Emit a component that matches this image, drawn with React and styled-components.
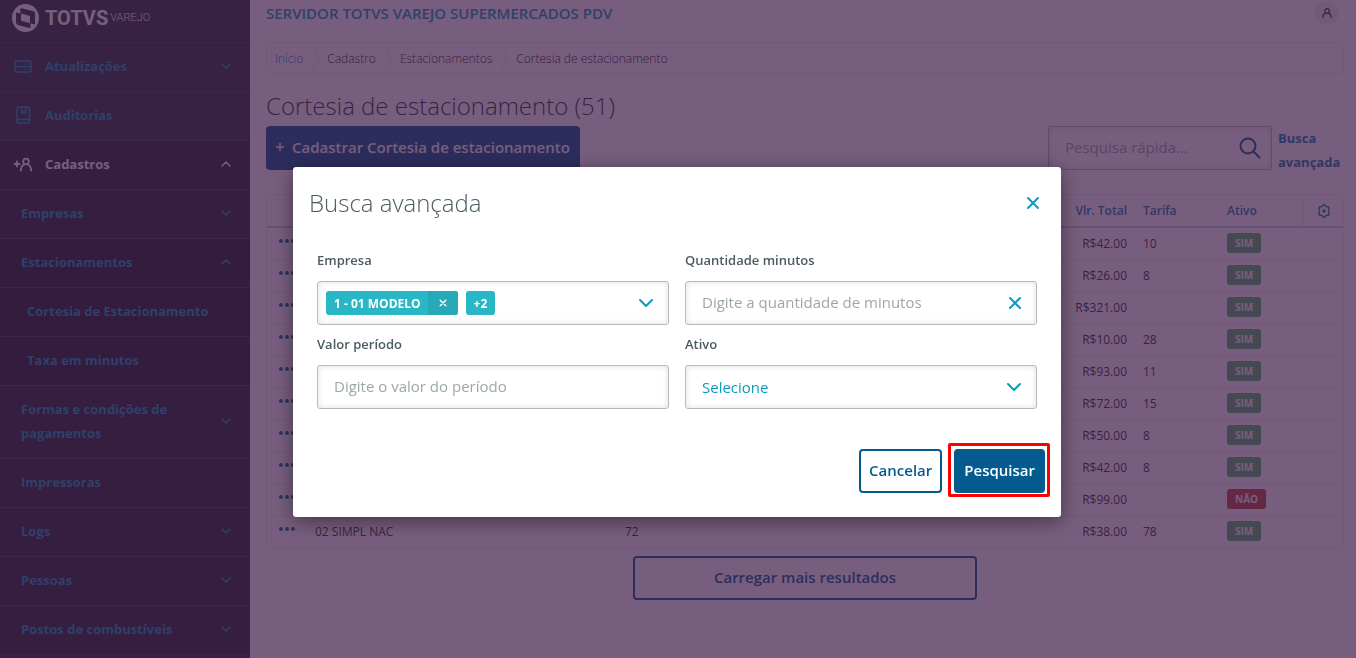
import React from "react";
import styled, { createGlobalStyle } from "styled-components";

const Global = createGlobalStyle`
  *, *::before, *::after { box-sizing: border-box; }
  body { margin: 0; }
  body, button, input, select { font-family: "Open Sans", "Noto Sans", sans-serif; }
  button { cursor: pointer; }
  a { text-decoration: none; }
  svg { display: block; flex: none; }
`;

const Page = styled.div`
  display: flex;
  height: 100vh;
  overflow: hidden;
  background: #fff;
`;

/* ---------- side menu ---------- */

const Sidebar = styled.nav`
  flex: 0 0 250px;
  background: #2c3739;
`;

const Brand = styled.div`
  display: flex;
  align-items: center;
  height: 42px;
  padding: 0 12px 6px;
  color: #fff;
`;

const BrandName = styled.span`
  margin-left: 6px;
  font: bold 20px/24px Roboto, sans-serif;
`;

const BrandUnit = styled.span`
  margin-left: 2px;
  font: 300 11px/24px Roboto, sans-serif;
`;

const MenuList = styled.ul`
  margin: 0;
  padding: 0;
  list-style: none;
  border-bottom: 1px solid #394649;
`;

const MenuLink = styled.a`
  display: flex;
  align-items: center;
  padding: 11px 18px 13px ${(p) => [13, 21, 27][p.$level]}px;
  border-top: 1px solid #394649;
  background: ${(p) => ["#2c3739", "#222b2d", "#1c2426"][p.$shade]};
  color: ${(p) => (p.$active ? "#fff" : "#0c9abe")};
  font-size: 13px;
  font-weight: 700;
  line-height: 24px;
`;

const MenuIcon = styled.span`
  width: 32px;
`;

const MenuLabel = styled.span`
  flex: 1;
  max-width: 192px;
`;

const MenuArrow = styled.span`
  margin-left: auto;
`;

/* ---------- main area ---------- */

const Main = styled.main`
  flex: 1;
  min-width: 0;
  padding: 0 12px 0 16px;
`;

const TopBar = styled.header`
  display: flex;
  align-items: center;
  justify-content: space-between;
  height: 42px;
  padding: 0 5px 16px 0;
  color: #0c9abe;
  font-size: 15px;
  font-weight: 600;
  line-height: 24px;
`;

const Avatar = styled.button`
  display: grid;
  place-items: center;
  width: 24px;
  height: 24px;
  padding: 0;
  border: 0;
  border-radius: 50%;
  background: #eceeee;
  color: #2c3739;
`;

const Crumbs = styled.nav`
  display: flex;
  align-items: center;
  gap: 8px;
  height: 32px;
  margin-bottom: 12px;
  padding: 0 8px;
  border: 1px solid #eceeee;
  border-radius: 3px;
  font-size: 12px;
  font-weight: 300;
  color: #1d2426;
`;

const CrumbLink = styled.a`
  color: #0c7fae;
`;

const PageTitle = styled.h1`
  margin: 0;
  color: #2c3739;
  font-size: 24px;
  font-weight: 300;
  line-height: 40px;
`;

const ActionBar = styled.div`
  display: flex;
  align-items: flex-start;
  justify-content: space-between;
  margin-bottom: 20px;
`;

const Button = styled.button`
  display: flex;
  align-items: center;
  justify-content: center;
  gap: 8px;
  height: 44px;
  padding: 0 8px 2px;
  border: 2px solid #045b8f;
  border-radius: 4px;
  background: ${(p) => (p.$primary ? "#045b8f" : "transparent")};
  color: ${(p) => (p.$primary ? "#fff" : "#045b8f")};
  font-size: 15px;
  font-weight: 600;
`;

const LoadMore = styled(Button)`
  width: 32%;
  margin: 8px auto 0;
`;

const SearchArea = styled.div`
  display: flex;
  gap: 6px;
  width: 296px;
`;

const Field = styled.div`
  display: flex;
  align-items: center;
  width: 100%;
  min-width: 0;
  height: 44px;
  padding: 0 ${(p) => p.$right || 14}px 0 ${(p) => p.$left || 16}px;
  border: 1px solid #b2bcbf;
  border-radius: 3px;
  background: #fff;
  box-shadow: inset 0 0 6px rgba(0, 0, 0, 0.12);
`;

const TextInput = styled.input`
  flex: 1;
  min-width: 0;
  padding: 0 0 2px;
  border: 0;
  outline: 0;
  background: transparent;
  font-size: 15px;
  line-height: 24px;
  &::placeholder { color: #9da7a9; opacity: 1; }
`;

const IconButton = styled.button`
  display: grid;
  place-items: center;
  width: ${(p) => (p.$fill ? "100%" : "auto")};
  padding: 0;
  border: 0;
  background: transparent;
  color: ${(p) => p.$color || "#0c9abe"};
`;

const AdvancedLink = styled.a`
  flex: 0 0 66px;
  color: #0c7fae;
  font-size: 13px;
  font-weight: 700;
  line-height: 24px;
`;

/* ---------- table ---------- */

const TableFrame = styled.div`
  border: 1px solid #eceeee;
  border-radius: 3px;
`;

const Table = styled.table`
  width: 100%;
  table-layout: fixed;
  border-collapse: separate;
  border-spacing: 0;
  color: #2c3739;
  font-size: 12px;
`;

const Col = styled.col`
  width: ${(p) => p.$w};
`;

const Th = styled.th`
  height: 33px;
  padding: 0 8px;
  border-bottom: 2px solid #c0d4e4;
  border-left: ${(p) => (p.$divider ? "1px solid #eceeee" : "0")};
  color: #0c7fae;
  font-weight: 600;
  text-align: ${(p) => p.$align || "left"};
`;

const Td = styled.td`
  height: 32px;
  padding: 0 8px ${(p) => (p.$raised ? 2 : 0)}px;
  border-bottom: 1px solid #eceeee;
  text-align: ${(p) => p.$align || "left"};
  tr:last-child & { height: 31px; border-bottom: 0; }
`;

const Tag = styled.span`
  display: block;
  width: fit-content;
  padding: 0 8px;
  border-radius: 3px;
  background: ${(p) => (p.$no ? "#c64840" : "#56b96b")};
  color: #fff;
  font-size: 10px;
  font-weight: 700;
  line-height: 20px;
`;

/* ---------- modal ---------- */

const Overlay = styled.div`
  position: fixed;
  inset: 0;
  display: grid;
  place-items: center;
  padding: 26px 2px 0 0;
  background: rgba(61, 26, 71, 0.7);
`;

const Dialog = styled.section`
  width: 768px;
  max-width: 100%;
  padding: 16px 16px 24px;
  border-radius: 3px;
  background: #fff;
  box-shadow: 0 4px 20px rgba(0, 0, 0, 0.45);
`;

const DialogHead = styled.header`
  display: flex;
  align-items: center;
  justify-content: space-between;
  padding-right: 5px;
`;

const DialogTitle = styled.h2`
  margin: 0;
  color: #4a5c60;
  font-size: 24px;
  font-weight: 300;
  line-height: 40px;
`;

const Form = styled.form`
  display: grid;
  grid-template-columns: 1fr 1fr;
  column-gap: 16px;
  padding: 24px 8px 34px;
`;

const Group = styled.div`
  display: flex;
  flex-direction: column;
  height: 84px;
`;

const Label = styled.label`
  height: 34px;
  color: #4a5c60;
  font-size: 13px;
  font-weight: 600;
  line-height: 26px;
`;

const Chip = styled.span`
  display: flex;
  align-items: center;
  height: 24px;
  margin-right: 8px;
  padding-left: 8px;
  padding-right: ${(p) => (p.$closable ? 0 : 8)}px;
  overflow: hidden;
  border-radius: 3px;
  background: #29b6c5;
  color: #fff;
  font-size: 12px;
  font-weight: 700;
`;

const ChipClose = styled.button`
  display: grid;
  place-items: center;
  width: 30px;
  height: 24px;
  margin-left: 7px;
  padding: 0;
  border: 0;
  background: #28a9b7;
  color: #fff;
`;

const Spring = styled.span`
  flex: 1;
`;

const Select = styled.select`
  flex: 1;
  height: 42px;
  padding: 0;
  border: 0;
  outline: 0;
  appearance: none;
  background: transparent;
  color: #0c9abe;
  font-size: 15px;
`;

const DialogFoot = styled.footer`
  display: flex;
  justify-content: flex-end;
  gap: 12px;
`;

const Highlight = styled.div`
  position: relative;
  &::after {
    content: "";
    position: absolute;
    inset: -6px -5px -4px -6px;
    border: 3px solid #f00;
    border-radius: 2px;
    pointer-events: none;
  }
`;

/* ---------- icons ---------- */

const Stroke = ({ w = 16, h = w, box = `0 0 ${w} ${h}`, sw = 2, children }) => (
  <svg width={w} height={h} viewBox={box} fill="none" stroke="currentColor" strokeWidth={sw} strokeLinecap="round" strokeLinejoin="round" aria-hidden="true">
    {children}
  </svg>
);

const Chevron = ({ up, big }) =>
  big ? (
    <Stroke w={16} h={10} sw={2}><path d="M2 2 8 8 14 2" /></Stroke>
  ) : (
    <Stroke w={12} h={8} sw={1.5}><path d={up ? "M2 6 6 2 10 6" : "M2 2 6 6 10 2"} /></Stroke>
  );

const Cross = ({ size = 14, sw = 2 }) => (
  <Stroke w={size} box="0 0 14 14" sw={sw}><path d="M2 2 12 12M12 2 2 12" /></Stroke>
);

const ServerIcon = () => (
  <Stroke w={20} sw={1.5}>
    <rect x="2" y="5" width="16" height="11" rx="2" />
    <path d="M2 10.500h16M12 7.800h.1M15 7.800h.1M12 13.200h.1M15 13.200h.1" />
  </Stroke>
);

const BookIcon = () => (
  <Stroke w={20} sw={1.5}>
    <rect x="4" y="2" width="12.500" height="16" rx="1.500" />
    <path d="M4 14.500h12.500M8.500 2v6.500l2-1.800 2 1.800V2" />
  </Stroke>
);

const AddUserIcon = () => (
  <Stroke w={20} sw={1.8}>
    <path d="M1.500 10h5M4 7.500v5" />
    <circle cx="13" cy="7.500" r="2.800" />
    <path d="M7.800 16.500c0-3 1.500-5 3.500-6.200M18.200 16.500c0-3-1.500-5-3.500-6.200" />
  </Stroke>
);

const UserIcon = () => (
  <Stroke w={12} sw={1.200}>
    <circle cx="6" cy="4" r="2.300" />
    <path d="M1.800 10.500c0-2.400 1.200-3.800 3-4.600M10.200 10.500c0-2.400-1.200-3.800-3-4.600" />
  </Stroke>
);

const SearchIcon = () => (
  <Stroke w={22} sw={2}>
    <circle cx="9" cy="9" r="7.500" />
    <path d="m14.500 14.500 6 6" />
  </Stroke>
);

const GearIcon = () => (
  <Stroke w={14} sw={1.300}>
    <path d="M5.300 2.200 6 .9h2l.7 1.300 1 .6 1.600-.1 1 1.800-.8 1.300v2.400l.8 1.300-1 1.800-1.600-.1-1 .6L8 13.100H6l-.7-1.300-1-.6-1.600.1-1-1.800.8-1.300V5.800l-.8-1.300 1-1.800 1.600.1Z" />
    <circle cx="7" cy="7" r="1" />
  </Stroke>
);

const DotsIcon = () => (
  <svg width="18" height="12" viewBox="0 0 18 12" fill="currentColor" aria-hidden="true">
    <circle cx="3" cy="3" r="2" />
    <circle cx="9" cy="3" r="2" />
    <circle cx="15" cy="3" r="2" />
  </svg>
);

const TotvsMark = () => (
  <svg width="27" height="28" viewBox="0 0 27 28" aria-hidden="true">
    <ellipse cx="13.500" cy="14" rx="13.500" ry="14" fill="currentColor" />
    <path d="M9.500 4.200 21.500 7.200Q23 7.700 23 9.200V20.500L8.300 16.800V5.200Q8.300 4 9.500 4.200Z" fill="#2c3739" />
    <path d="M4 8.500 18.500 12V23.200Q18.500 24.300 17.300 24L6 21Q4 20.300 4 18.500Z" fill="#2c3739" />
    <path d="M9 9.500 18 12V19.200L9 16.800Z" fill="currentColor" />
  </svg>
);

const CrumbSep = () => (
  <svg width="8" height="30" viewBox="0 0 8 30" fill="none" stroke="#e6e9ea" aria-hidden="true">
    <path d="M.5 0 7.500 16 .5 30" />
  </svg>
);

/* ---------- data ---------- */

const menu = [
  { label: "Atualizações", level: 0, shade: 0, icon: <ServerIcon />, arrow: "down" },
  { label: "Auditorias", level: 0, shade: 0, icon: <BookIcon /> },
  { label: "Cadastros", level: 0, shade: 1, icon: <AddUserIcon />, arrow: "up", active: true },
  { label: "Empresas", level: 1, shade: 1, arrow: "down" },
  { label: "Estacionamentos", level: 1, shade: 2, arrow: "up" },
  { label: "Cortesia de Estacionamento", level: 2, shade: 2 },
  { label: "Taxa em minutos", level: 2, shade: 2 },
  { label: "Formas e condições de pagamentos", level: 1, shade: 1, arrow: "down" },
  { label: "Impressoras", level: 1, shade: 1 },
  { label: "Logs", level: 1, shade: 1, arrow: "down" },
  { label: "Pessoas", level: 1, shade: 1, arrow: "down" },
  { label: "Postos de combustíveis", level: 1, shade: 1, arrow: "down" },
];

const rows = [
  { total: "R$42.00", fare: "10" },
  { total: "R$26.00", fare: "8" },
  { total: "R$321.00", fare: "" },
  { total: "R$10.00", fare: "28" },
  { total: "R$93.00", fare: "11" },
  { total: "R$72.00", fare: "15" },
  { total: "R$50.00", fare: "8" },
  { total: "R$42.00", fare: "8" },
  { total: "R$99.00", fare: "", inactive: true },
  { company: "02 SIMPL NAC", minutes: "72", total: "R$38.00", fare: "78" },
];

export default function App() {
  return (
    <>
      <Global />
      <Page>
        <Sidebar aria-label="Menu">
          <Brand>
            <TotvsMark />
            <BrandName>TOTVS</BrandName>
            <BrandUnit>VAREJO</BrandUnit>
          </Brand>
          <MenuList>
            {menu.map((m) => (
              <li key={m.label}>
                <MenuLink href="#" $level={m.level} $shade={m.shade} $active={m.active}>
                  {m.icon && <MenuIcon>{m.icon}</MenuIcon>}
                  <MenuLabel>{m.label}</MenuLabel>
                  {m.arrow && <MenuArrow><Chevron up={m.arrow === "up"} /></MenuArrow>}
                </MenuLink>
              </li>
            ))}
          </MenuList>
        </Sidebar>

        <Main>
          <TopBar>
            <span>SERVIDOR TOTVS VAREJO SUPERMERCADOS PDV</span>
            <Avatar aria-label="Usuário"><UserIcon /></Avatar>
          </TopBar>
          <Crumbs aria-label="Trilha">
            <CrumbLink href="#">Início</CrumbLink>
            <CrumbSep />
            <span>Cadastro</span>
            <CrumbSep />
            <span>Estacionamentos</span>
            <CrumbSep />
            <span>Cortesia de estacionamento</span>
          </Crumbs>
          <PageTitle>Cortesia de estacionamento (51)</PageTitle>
          <ActionBar>
            <Button $primary>
              <Stroke w={8} sw={1.500}><path d="M4 0v8M0 4h8" /></Stroke>
              Cadastrar Cortesia de estacionamento
            </Button>
            <SearchArea>
              <Field $right={10}>
                <TextInput type="search" aria-label="Pesquisa rápida" placeholder="Pesquisa rápida..." />
                <IconButton $color="#045b8f" aria-label="Pesquisar"><SearchIcon /></IconButton>
              </Field>
              <AdvancedLink href="#">Busca avançada</AdvancedLink>
            </SearchArea>
          </ActionBar>

          <TableFrame>
            <Table>
              <colgroup>
                <Col $w="40px" />
                <Col $w="310px" />
                <Col $w="auto" />
                <Col $w="84px" />
                <Col $w="84px" />
                <Col $w="84px" />
                <Col $w="40px" />
              </colgroup>
              <thead>
                <tr>
                  <Th />
                  <Th />
                  <Th />
                  <Th $align="right">Vlr. Total</Th>
                  <Th>Tarífa</Th>
                  <Th>Ativo</Th>
                  <Th $divider>
                    <IconButton $fill $color="#0c6f9f" aria-label="Configurar colunas"><GearIcon /></IconButton>
                  </Th>
                </tr>
              </thead>
              <tbody>
                {rows.map((r, i) => (
                  <tr key={i}>
                    <Td>
                      <IconButton $fill $color="#0c6f9f" aria-label="Ações"><DotsIcon /></IconButton>
                    </Td>
                    <Td>{r.company}</Td>
                    <Td>{r.minutes}</Td>
                    <Td $align="right">{r.total}</Td>
                    <Td>{r.fare}</Td>
                    <Td $raised><Tag $no={r.inactive}>{r.inactive ? "NÃO" : "SIM"}</Tag></Td>
                    <Td />
                  </tr>
                ))}
              </tbody>
            </Table>
          </TableFrame>
          <LoadMore>Carregar mais resultados</LoadMore>
        </Main>
      </Page>

      <Overlay>
        <Dialog role="dialog" aria-modal="true" aria-labelledby="dialog-title">
          <DialogHead>
            <DialogTitle id="dialog-title">Busca avançada</DialogTitle>
            <IconButton aria-label="Fechar"><Cross /></IconButton>
          </DialogHead>
          <Form>
            <Group>
              <Label htmlFor="company">Empresa</Label>
              <Field $left={8}>
                <Chip $closable>
                  1 - 01 MODELO
                  <ChipClose type="button" aria-label="Remover 1 - 01 MODELO"><Cross size={8} sw={2.500} /></ChipClose>
                </Chip>
                <Chip>+2</Chip>
                <Spring />
                <IconButton type="button" id="company" aria-label="Abrir lista"><Chevron big /></IconButton>
              </Field>
            </Group>
            <Group>
              <Label htmlFor="minutes">Quantidade minutos</Label>
              <Field>
                <TextInput id="minutes" placeholder="Digite a quantidade de minutos" />
                <IconButton type="button" aria-label="Limpar"><Cross /></IconButton>
              </Field>
            </Group>
            <Group>
              <Label htmlFor="value">Valor período</Label>
              <Field>
                <TextInput id="value" placeholder="Digite o valor do período" />
              </Field>
            </Group>
            <Group>
              <Label htmlFor="active">Ativo</Label>
              <Field>
                <Select id="active" defaultValue="">
                  <option value="">Selecione</option>
                </Select>
                <IconButton as="span"><Chevron big /></IconButton>
              </Field>
            </Group>
          </Form>
          <DialogFoot>
            <Button>Cancelar</Button>
            <Highlight>
              <Button $primary>Pesquisar</Button>
            </Highlight>
          </DialogFoot>
        </Dialog>
      </Overlay>
    </>
  );
}
